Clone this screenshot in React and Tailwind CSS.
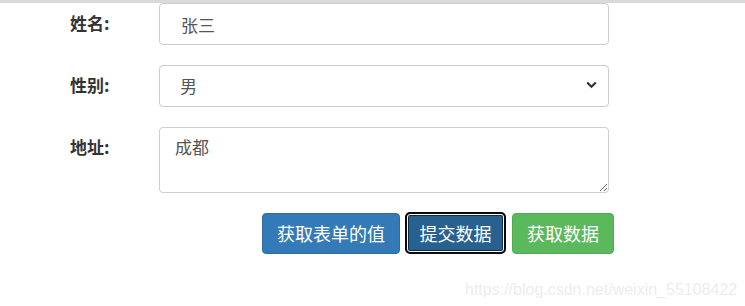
import React from "react";

const labelCls =
  "w-[89px] shrink-0 pt-[8px] text-[17px] leading-[23px] font-bold text-[#333]";
const controlCls =
  "w-[450px] rounded-[4px] border border-[#ccc] bg-white text-[17px] text-[#555] outline-none";

const App = () => {
  return (
    <div
      className="relative w-[745px] h-[306px] bg-white border-t-[3px] border-[#dadada]"
      style={{ fontFamily: '"Noto Sans CJK SC", "Liberation Sans", sans-serif' }}
    >
      <div className="flex flex-col gap-[20px] pl-[70px]">
        <div className="flex items-start">
          <label className={labelCls}>姓名:</label>
          <input
            type="text"
            defaultValue="张三"
            className={`${controlCls} h-[42px] pl-[21px]`}
          />
        </div>

        <div className="flex items-start">
          <label className={labelCls}>性别:</label>
          <div className="relative">
            <select
              defaultValue="男"
              className={`${controlCls} h-[42px] pl-[20px] appearance-none`}
            >
              <option>男</option>
              <option>女</option>
            </select>
            <svg
              className="absolute right-[12px] top-[16px] pointer-events-none"
              width="11"
              height="8"
              viewBox="0 0 11 8"
            >
              <path
                d="M1.2 1.5 L5.5 5.8 L9.8 1.5"
                fill="none"
                stroke="#333"
                strokeWidth="2.2"
              />
            </svg>
          </div>
        </div>

        <div className="flex items-start">
          <label className={labelCls}>地址:</label>
          <textarea
            defaultValue="成都"
            className={`${controlCls} h-[66px] pl-[15px] pt-[7px] leading-[23px] resize-y`}
          />
        </div>
      </div>

      <div className="flex items-center pl-[262px] mt-[19px]">
        <button className="w-[138px] h-[41px] rounded-[4px] border border-[#2e6da4] bg-[#337ab7] text-white text-[18px]">
          获取表单的值
        </button>
        <button className="ml-[5px] w-[101px] h-[42px] rounded-[5px] border-2 border-[#0a0a0a] bg-[#286090] text-white text-[18px] shadow-[inset_0_0_0_1px_#ffffff,inset_0_0_0_2px_#122b40]">
          提交数据
        </button>
        <button className="ml-[6px] w-[102px] h-[41px] rounded-[4px] border border-[#4cae4c] bg-[#5cb85c] text-white text-[18px]">
          获取数据
        </button>
      </div>

      <div
        className="absolute left-[465px] top-[275px] text-[16px] text-[#ededed]"
        style={{ fontFamily: '"Liberation Sans", Arial, sans-serif' }}
      >
        https://blog.csdn.net/weixin_55108422
      </div>
    </div>
  );
};

export default App;
